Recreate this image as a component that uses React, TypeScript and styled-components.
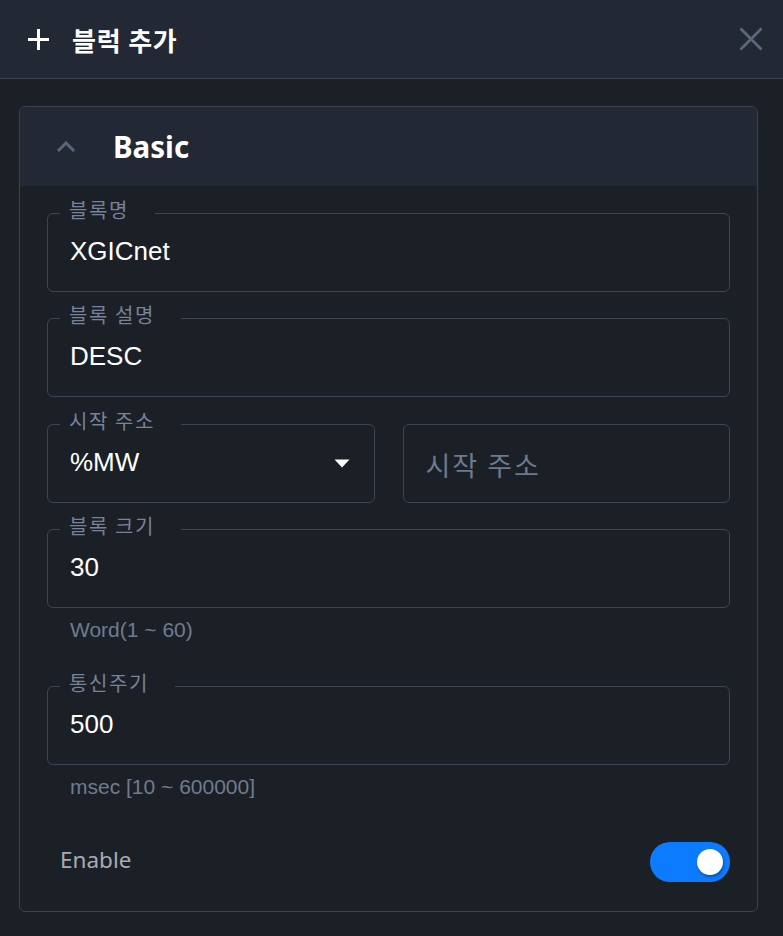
import React from "react";
import styled, { createGlobalStyle } from "styled-components";

const Global = createGlobalStyle`
  html, body { margin: 0; padding: 0; background: #1b1f26; }
  body { font-family: "Noto Sans", "Noto Sans CJK KR", sans-serif; }
  * { box-sizing: border-box; }
`;

const Page = styled.div`
  width: 783px;
  height: 936px;
  background: #1b1f26;
  display: flex;
  flex-direction: column;
`;

const Header = styled.header`
  height: 79px;
  background: #232934;
  border-bottom: 1px solid #3a4250;
  display: flex;
  align-items: center;
  padding: 0 20px 0 27px;
`;

const Title = styled.h1`
  margin: 0 0 0 22px;
  font-family: "Noto Sans CJK KR", sans-serif;
  font-weight: 700;
  font-size: 26px;
  letter-spacing: 0.8px;
  color: #ffffff;
  flex: 1;
`;

const CloseBtn = styled.button`
  background: none;
  border: 0;
  padding: 0;
  display: flex;
  color: #5e6879;
`;

const Body = styled.main`
  padding: 27px 25px 24px 19px;
  flex: 1;
`;

const Card = styled.section`
  border: 1px solid #3a4250;
  border-radius: 6px;
  overflow: hidden;
  background: #1b1f26;
`;

const CardHead = styled.div`
  height: 79px;
  background: #232934;
  display: flex;
  align-items: center;
  padding-left: 36px;
`;

const CardTitle = styled.h2`
  margin: 0 0 0 37px;
  font-family: "Noto Sans", sans-serif;
  font-weight: 700;
  font-size: 29.5px;
  color: #ffffff;
`;

const Form = styled.div`
  padding: 27px 27px 29px 27px;
  display: flex;
  flex-direction: column;
`;

const Row = styled.div<{ $mb: number }>`
  display: grid;
  grid-template-columns: 1fr 1fr;
  gap: 28px;
  margin-bottom: ${(p) => p.$mb}px;
`;

const FieldWrap = styled.div<{ $span?: boolean; $mb?: number }>`
  position: relative;
  grid-column: ${(p) => (p.$span ? "1 / -1" : "auto")};
  margin-bottom: ${(p) => p.$mb ?? 0}px;
`;

const Box = styled.div`
  height: 79px;
  border: 1px solid #3d4555;
  border-radius: 6px;
  display: flex;
  align-items: center;
  padding: 0 22px;
  gap: 12px;
`;

const Label = styled.span`
  position: absolute;
  left: 13px;
  top: -17px;
  padding: 0 26px 0 9px;
  background: #1b1f26;
  font-family: "Noto Sans CJK KR", sans-serif;
  font-size: 20px;
  letter-spacing: 1.6px;
  line-height: 28px;
  color: #76839a;
`;

const Value = styled.span<{ $placeholder?: boolean }>`
  flex: 1;
  font-family: ${(p) => (p.$placeholder ? `"Noto Sans CJK KR", sans-serif` : `"Liberation Sans", Arial, sans-serif`)};
  font-size: ${(p) => (p.$placeholder ? 27 : 26)}px;
  letter-spacing: ${(p) => (p.$placeholder ? 2 : 0)}px;
  color: ${(p) => (p.$placeholder ? "#6d7a8e" : "#ffffff")};
  margin-top: ${(p) => (p.$placeholder ? 2 : -3)}px;
`;

const Helper = styled.div<{ $mb: number }>`
  padding: 10px 0 0 23px;
  font-family: "Liberation Sans", Arial, sans-serif;
  font-size: 21px;
  color: #6f7c90;
  margin-bottom: ${(p) => p.$mb}px;
`;

const EnableRow = styled.div`
  display: flex;
  align-items: center;
  justify-content: space-between;
  padding: 0 0 0 13px;
`;

const EnableText = styled.span`
  font-family: "Noto Sans", sans-serif;
  font-size: 22.5px;
  color: #a7acb4;
  padding-bottom: 5px;
`;

const Switch = styled.div`
  width: 80px;
  height: 40px;
  border-radius: 20px;
  background: #0d7bff;
  display: flex;
  align-items: center;
  justify-content: flex-end;
  padding-right: 7px;
`;

const Knob = styled.div`
  width: 26px;
  height: 26px;
  border-radius: 50%;
  background: #ffffff;
  box-shadow: 1px 2px 3px rgba(0, 0, 0, 0.35);
`;

const Field: React.FC<{ label?: string; value: string; placeholder?: boolean; select?: boolean; span?: boolean; mb?: number }> = ({ label, value, placeholder, select, span, mb }) => (
  <FieldWrap $span={span} $mb={mb}>
    <Box>
      <Value $placeholder={placeholder}>{value}</Value>
      {select && (
        <svg width="16" height="9" viewBox="0 0 16 9" style={{ marginRight: 2 }}>
          <path d="M0.5 0.5 L15.5 0.5 L8 8.5 Z" fill="#ffffff" />
        </svg>
      )}
    </Box>
    {label && <Label>{label}</Label>}
  </FieldWrap>
);

export default function App() {
  return (
    <Page>
      <Global />
      <Header>
        <svg width="23" height="23" viewBox="0 0 23 23">
          <path d="M11.5 1 V22 M1 11.5 H22" stroke="#fff" strokeWidth="3" />
        </svg>
        <Title>블럭 추가</Title>
        <CloseBtn aria-label="close">
          <svg width="24" height="24" viewBox="0 0 24 24">
            <path d="M1.5 1.5 L22.5 22.5 M22.5 1.5 L1.5 22.5" stroke="currentColor" strokeWidth="2.6" />
          </svg>
        </CloseBtn>
      </Header>
      <Body>
        <Card>
          <CardHead>
            <svg width="20" height="12" viewBox="0 0 20 12">
              <path d="M2 10 L10 2 L18 10" stroke="#5a6577" strokeWidth="3" fill="none" />
            </svg>
            <CardTitle>Basic</CardTitle>
          </CardHead>
          <Form>
            <Field label="블록명" value="XGICnet" span mb={26} />
            <Field label="블록 설명" value="DESC" span mb={27} />
            <Row $mb={26}>
              <Field label="시작 주소" value="%MW" select />
              <Field value="시작 주소" placeholder />
            </Row>
            <Field label="블록 크기" value="30" span />
            <Helper $mb={44}>Word(1 ~ 60)</Helper>
            <Field label="통신주기" value="500" span />
            <Helper $mb={43}>msec [10 ~ 600000]</Helper>
            <EnableRow>
              <EnableText>Enable</EnableText>
              <Switch>
                <Knob />
              </Switch>
            </EnableRow>
          </Form>
        </Card>
      </Body>
    </Page>
  );
}
